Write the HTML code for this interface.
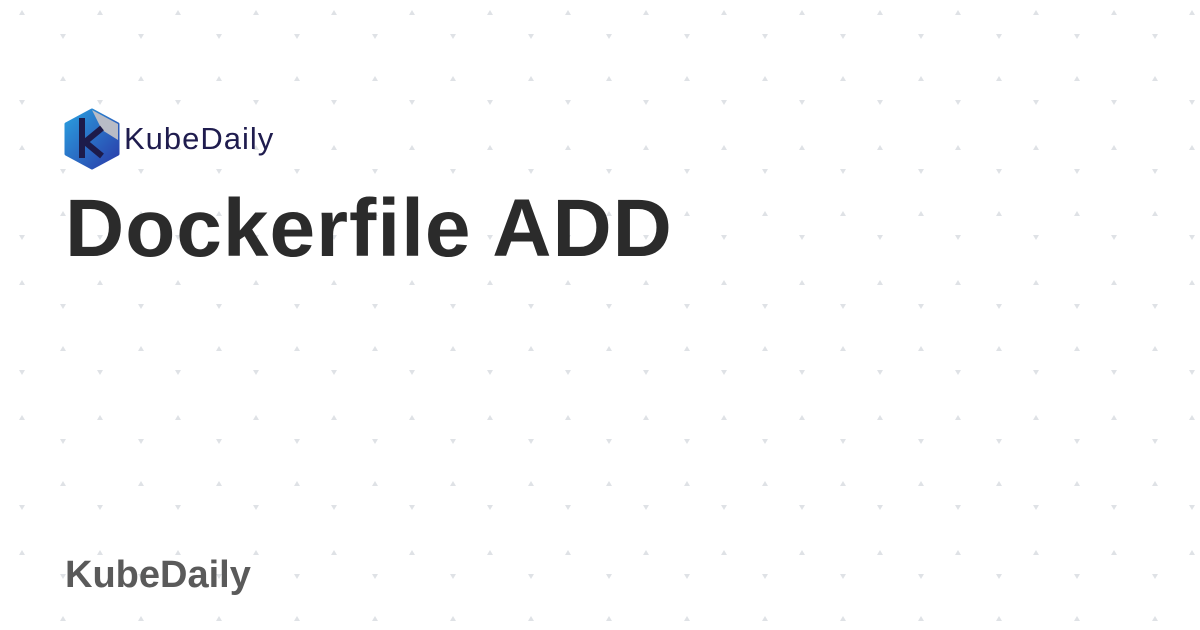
<!DOCTYPE html>
<html><head><meta charset="utf-8"><style>
html,body{margin:0;padding:0}
body{width:1200px;height:630px;overflow:hidden;position:relative;background:#fff;font-family:"Liberation Sans",sans-serif}
.pat{position:absolute;inset:0}
.t{position:absolute;left:65px;top:188px;font-size:82px;font-weight:bold;color:#2b2b2b;line-height:1;white-space:nowrap;letter-spacing:1px}
.f{position:absolute;left:65px;top:556px;font-size:38px;font-weight:bold;color:#5a5a5a;line-height:1;letter-spacing:0}
.logo{position:absolute;left:62px;top:108px}
.lt{position:absolute;left:124px;top:123px;font-size:31px;color:#1f1c4e;line-height:1;letter-spacing:1px}
</style></head><body>
<svg class="pat" width="1200" height="630">
<defs>
<pattern id="p" x="0" y="10" width="78" height="135" patternUnits="userSpaceOnUse">
<path d="M22 0 l3 5 h-6z" fill="#dfe2e6"/>
<path d="M60 24 h6 l-3 5z" fill="#dfe2e6"/>
<path d="M63 66 l3 5 h-6z" fill="#dfe2e6"/>
<path d="M19 90 h6 l-3 5z" fill="#dfe2e6"/>
</pattern>
</defs>
<rect width="1200" height="630" fill="url(#p)"/>
</svg>
<svg class="logo" width="60" height="62" viewBox="0 0 60 62">
<defs><linearGradient id="g" x1="0" y1="0" x2="1" y2="1"><stop offset="0" stop-color="#2aa0e0"/><stop offset="1" stop-color="#2a3aa8"/></linearGradient></defs>
<path d="M30 2 L56 16 L56 46 L30 60 L4 46 L4 16 Z" fill="url(#g)" stroke="url(#g)" stroke-width="3" stroke-linejoin="round"/>
<path d="M30 2 L56 16 L56 32 L40 22 Z" fill="#b8bcc6"/>
<path d="M20 10 v40" stroke="#1d1b4a" stroke-width="6"/>
<path d="M40 20 L23 34 L40 48" stroke="#1d1b4a" stroke-width="6" fill="none"/>
</svg>
<div class="lt">KubeDaily</div>
<div class="t">Dockerfile ADD</div>
<div class="f">KubeDaily</div>
</body></html>
